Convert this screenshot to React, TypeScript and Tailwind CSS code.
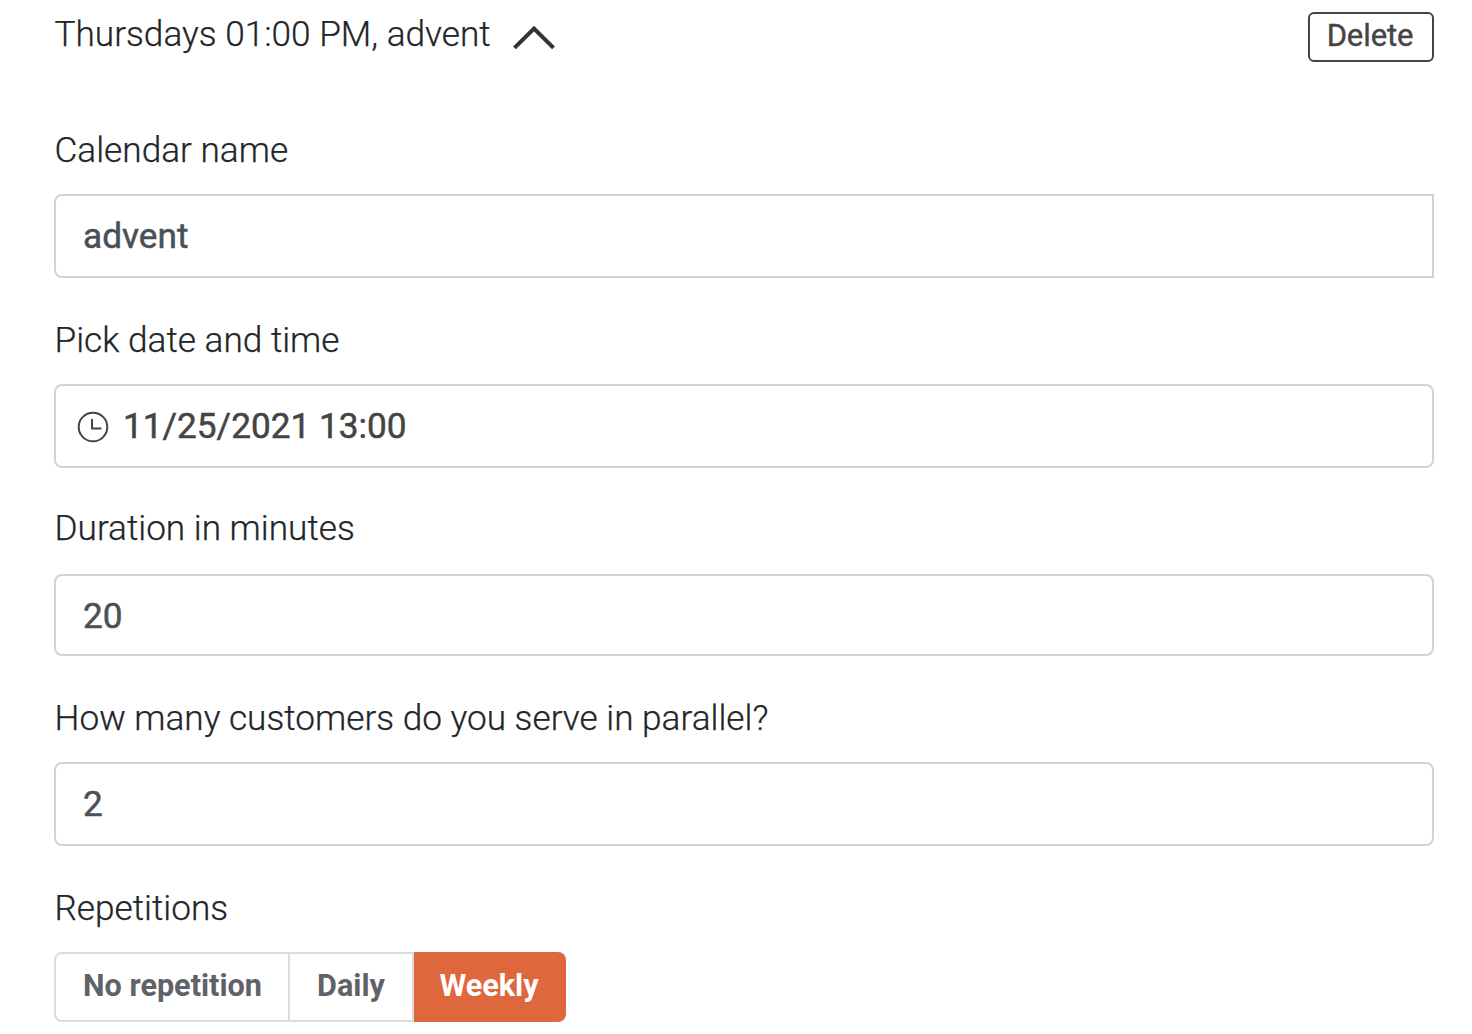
import React from 'react';

const label = 'font-light text-[35.2px] leading-[44px] text-[#212529] whitespace-nowrap pl-[0.5px] [-webkit-text-stroke:0.25px_currentColor]';
const field = 'flex items-center w-[1380px] border-2 border-[#ced4da] bg-white font-[450] text-[35.2px] whitespace-nowrap [-webkit-text-stroke:0.5px_currentColor]';

export default function App() {
  return (
    <main className="h-[1034px] w-[1472px] overflow-hidden bg-white pl-[54px] font-['Roboto',sans-serif]">
      <header className="flex w-[1380px] items-start justify-between pt-3">
        <div className="flex items-center">
          <span className={`${label} w-[436px]`}>Thursdays 01:00 PM, advent</span>
          <svg className="ml-[22px] mt-[6px]" width="44" height="26" viewBox="0 0 44 26" fill="none" stroke="#333" strokeWidth="4">
            <path d="M2.5 23.8 22 4.5l19.5 19.3" />
          </svg>
        </div>
        <button className="h-[50px] w-[126px] rounded-[6px] border-2 border-[#444] pb-[2px] pr-[2px] text-[31px] font-[450] leading-[42px] tracking-[-0.1px] text-[#444] [-webkit-text-stroke:0.4px_currentColor]">Delete</button>
      </header>
      <section className="mt-[66px]">
        <div className={label}>Calendar name</div>
        <div className={`${field} mt-[22px] h-[84px] rounded-l-lg pl-[27px] text-[#495057]`}>advent</div>
      </section>
      <section className="mt-[40px]">
        <div className={label}>Pick date and time</div>
        <div className={`${field} mt-[22px] h-[84px] rounded-lg pl-[21px] text-[#444]`}>
          <svg className="mr-[14px] mt-px" width="32" height="32" viewBox="0 0 32 32" fill="none" stroke="#444" strokeWidth="2">
            <circle cx="16" cy="16" r="14.3" />
            <path d="M15 8v9.5h9.5" />
          </svg>
          11/25/2021 13:00
        </div>
      </section>
      <section className="mt-[38px]">
        <div className={label}>Duration in minutes</div>
        <div className={`${field} mt-[24px] h-[82px] rounded-lg pl-[27px] pt-[2px] text-[#495057]`}>20</div>
      </section>
      <section className="mt-[40px]">
        <div className={label}>How many customers do you serve in parallel?</div>
        <div className={`${field} mt-[22px] h-[84px] rounded-lg pl-[27px] text-[#495057]`}>2</div>
      </section>
      <section className="mt-[40px]">
        <div className={label}>Repetitions</div>
        <div className="mt-[22px] flex h-[70px] w-[512px] text-[30.6px] font-bold text-[#5f6368]">
          <button className="w-[236px] rounded-l-lg border-2 border-[#dadce0] pb-[2px] pl-px">No repetition</button>
          <button className="w-[124px] border-y-2 border-r-2 border-[#dadce0] pb-[2px]">Daily</button>
          <button className="w-[152px] rounded-r-lg bg-[#de673e] pb-[2px] pr-[2px] text-white">Weekly</button>
        </div>
      </section>
    </main>
  );
}
